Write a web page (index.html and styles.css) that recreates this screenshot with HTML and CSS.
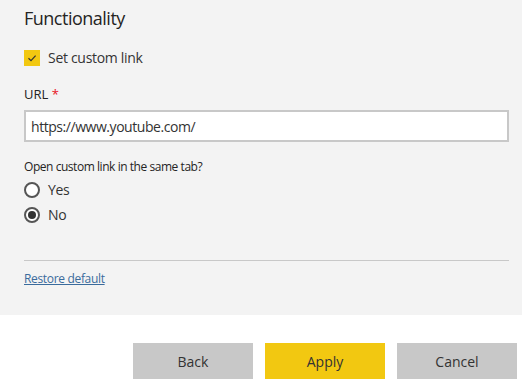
FILE: index.html
```html
<!DOCTYPE html>
<html lang="en">
<head>
    <meta charset="UTF-8">
    <title>Functionality</title>
    <link rel="stylesheet" href="styles.css">
</head>
<body>
    <div class="panel">
        <h2 class="title">Functionality</h2>

        <label class="check-row">
            <span class="checkbox">
                <svg width="16" height="16" viewBox="0 0 16 16"><path d="M4.5 8.2 L7 10.6 L11.6 5.6" fill="none" stroke="#333" stroke-width="1.2"/></svg>
            </span>
            Set custom link
        </label>

        <div class="field-label">URL <span class="req">*</span></div>
        <input class="url-input" type="text" value="https://www.youtube.com/">

        <div class="question">Open custom link in the same tab?</div>
        <div class="radio-row"><span class="radio"></span>Yes</div>
        <div class="radio-row second"><span class="radio checked"></span>No</div>

        <hr class="divider">
        <a class="restore" href="#">Restore default</a>
    </div>

    <div class="actions">
        <button class="btn">Back</button>
        <button class="btn primary">Apply</button>
        <button class="btn">Cancel</button>
    </div>
</body>
</html>
```

FILE: styles.css
```css
body {
    margin: 0;
    background: #ffffff;
    font-family: "Open Sans", "Noto Sans", sans-serif;
    color: #333;
}

/* grey settings area */
.panel {
    box-sizing: border-box;
    height: 315px;
    padding: 6px 13px 0 24px;
    background: #f3f3f3;
    display: flex;
    flex-direction: column;
    align-items: flex-start;
}

.title {
    margin: 0;
    font-size: 18px;
    line-height: 24px;
    font-weight: normal;
    letter-spacing: -0.5px;
    color: #252423;
}

.check-row {
    margin-top: 20px;
    height: 16px;
    display: flex;
    align-items: center;
    font-size: 14px;
    line-height: 16px;
    letter-spacing: -0.3px;
}

.checkbox {
    width: 16px;
    height: 16px;
    margin-right: 8px;
    background: #f2c811;
    display: flex;
}

.field-label {
    margin-top: 20px;
    font-size: 13px;
    line-height: 16px;
    color: #252423;
}

.req {
    color: #e81123;
}

.url-input {
    box-sizing: border-box;
    margin-top: 8px;
    width: 100%;
    height: 32px;
    padding: 0 5px;
    border: 2px solid #c8c8c8;
    background: #fff;
    font-family: inherit;
    font-size: 14px;
    letter-spacing: -0.45px;
    color: #333;
    outline: none;
}

.question {
    margin-top: 17px;
    font-size: 12px;
    line-height: 16px;
    letter-spacing: -0.45px;
    color: #252423;
}

.radio-row {
    margin-top: 7px;
    height: 16px;
    display: flex;
    align-items: center;
    font-size: 14px;
    line-height: 16px;
    letter-spacing: -0.3px;
}

.radio-row.second {
    margin-top: 9px;
}

.radio {
    box-sizing: border-box;
    width: 16px;
    height: 16px;
    margin-right: 8px;
    border: 2px solid #555;
    border-radius: 50%;
    background: #fff;
    display: flex;
    align-items: center;
    justify-content: center;
}

.radio.checked::after {
    content: "";
    width: 8px;
    height: 8px;
    border-radius: 50%;
    background: #333;
}

.divider {
    box-sizing: border-box;
    align-self: stretch;
    margin: 37px 0 0;
    border: none;
    border-top: 1px solid #c8c8c8;
    height: 1px;
}

.restore {
    margin-top: 10px;
    font-size: 12px;
    line-height: 16px;
    letter-spacing: -0.33px;
    color: #3a6b9c;
}

/* bottom buttons */
.actions {
    display: flex;
    justify-content: flex-end;
    gap: 12px;
    padding: 28px 5px 0 0;
}

.btn {
    width: 120px;
    height: 36px;
    border: none;
    background: #c8c8c8;
    font-family: inherit;
    font-size: 14px;
    color: #333;
    cursor: pointer;
}

.btn.primary {
    background: #f2c811;
}
```
